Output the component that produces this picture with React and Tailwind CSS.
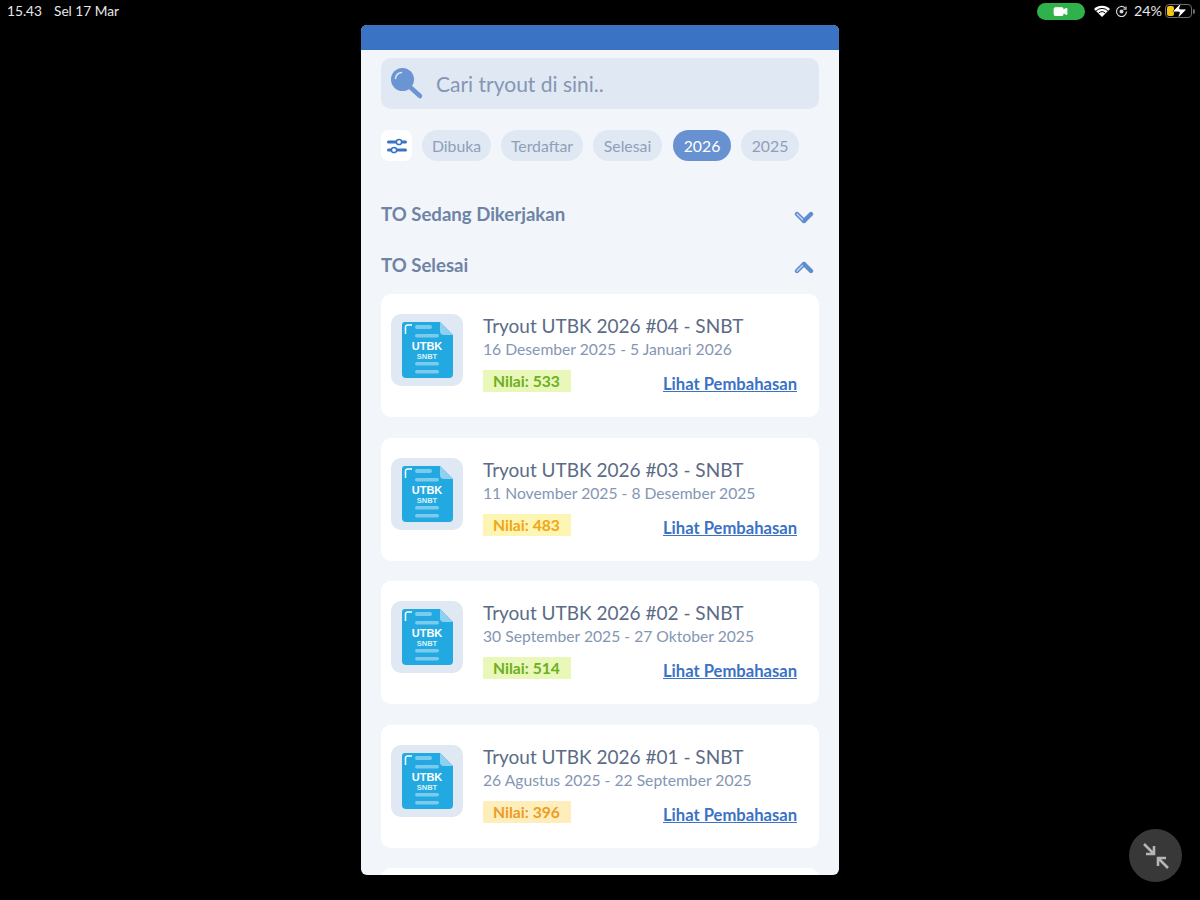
import { Video, Zap } from 'lucide-react';

const FONT = { fontFamily: '"Lato", "Noto Sans", sans-serif' };

const tryouts = [
  { title: 'Tryout UTBK 2026 #04 - SNBT', date: '16 Desember 2025 - 5 Januari 2026', score: 533, badge: 'bg-[#e9f7b8] text-[#6cb01e]' },
  { title: 'Tryout UTBK 2026 #03 - SNBT', date: '11 November 2025 - 8 Desember 2025', score: 483, badge: 'bg-[#fdf5b4] text-[#f3a512]' },
  { title: 'Tryout UTBK 2026 #02 - SNBT', date: '30 September 2025 - 27 Oktober 2025', score: 514, badge: 'bg-[#e9f7b8] text-[#6cb01e]' },
  { title: 'Tryout UTBK 2026 #01 - SNBT', date: '26 Agustus 2025 - 22 September 2025', score: 396, badge: 'bg-[#fdeebc] text-[#ee9c22]' },
];

const chips = [
  { label: 'Dibuka', width: 'w-[69px]' },
  { label: 'Terdaftar', width: 'w-[82px]' },
  { label: 'Selesai', width: 'w-[69px]' },
  { label: '2026', width: 'w-[58px] ml-px' },
  { label: '2025', width: 'w-[58px]' },
];

function DocIcon() {
  return (
    <div className="flex h-[72px] w-[72px] shrink-0 items-center justify-center rounded-[10px] bg-[#dfe8f3]">
      <svg width="51" height="56" viewBox="0 0 51 56">
        <path d="M3 0H38L51 13V52a4 4 0 0 1-4 4H4a4 4 0 0 1-4-4V3a3 3 0 0 1 3-3Z" fill="#23a9e1" />
        <path d="M38 0L51 13H42a4 4 0 0 1-4-4Z" fill="#8fd0ee" />
        <path d="M3.5 12V5a2 2 0 0 1 2-2H10" fill="none" stroke="#ffffff" strokeWidth="1.5" />
        <rect x="13" y="3" width="17" height="4" rx="2" fill="#7ccbee" />
        <rect x="13" y="12" width="24" height="3.5" rx="1.75" fill="#7ccbee" />
        <rect x="13" y="40" width="24" height="3.5" rx="1.75" fill="#7ccbee" />
        <rect x="13" y="48" width="24" height="3.5" rx="1.75" fill="#7ccbee" />
        <text x="25" y="28" textAnchor="middle" fontSize="11" fontWeight="700" fill="#ffffff" fontFamily="Liberation Sans, sans-serif">UTBK</text>
        <text x="25" y="37" textAnchor="middle" fontSize="7.5" fontWeight="700" fill="#d8f1fb" fontFamily="Liberation Sans, sans-serif">SNBT</text>
      </svg>
    </div>
  );
}

function TryoutCard({ item }) {
  return (
    <div className="flex h-[123px] gap-5 rounded-[10px] bg-white pl-[10px] pr-[22px] pt-5">
      <DocIcon />
      <div className="flex-1">
        <p className="-mt-px text-[19px] leading-[26px] text-[#5b6b86]">{item.title}</p>
        <p className="text-[15.7px] leading-[20px] text-[#8496b3]">{item.date}</p>
        <div className="mt-[11px] flex items-start justify-between">
          <span className={`w-[88px] pl-[10px] text-[15.7px] font-bold leading-[22px] ${item.badge}`}>Nilai: {item.score}</span>
          <a className="mt-[7px] border-b border-[#3a72c4] text-[16.6px] font-bold leading-[14px] text-[#3a72c4]">Lihat Pembahasan</a>
        </div>
      </div>
    </div>
  );
}

export default function App() {
  return (
    <div className="relative flex h-[900px] w-[1200px] flex-col overflow-hidden bg-black" style={FONT}>
      {/* status bar */}
      <div className="flex h-[25px] shrink-0 items-start justify-between pl-[7px] pr-[5px] pt-[2px] text-[13.7px] leading-[18px] text-[#e8e8e8]">
        <div className="flex gap-3">
          <span>15.43</span>
          <span>Sel 17 Mar</span>
        </div>
        <div className="flex items-center">
          <div className="mr-[9px] flex h-[17px] w-[48px] items-center justify-center rounded-full bg-[#2fb24c]">
            <Video size={15} fill="#ffffff" color="#ffffff" />
          </div>
          <svg width="16" height="12" viewBox="0 0 16 12">
            <path d="M8 12L0 4a11.5 11.5 0 0 1 16 0Z" fill="#ffffff" />
            <path d="M2.2 5.8a8.3 8.3 0 0 1 11.6 0" fill="none" stroke="#000000" strokeWidth="1" />
            <path d="M4.6 8.2a5 5 0 0 1 6.8 0" fill="none" stroke="#000000" strokeWidth="1" />
          </svg>
          <svg className="ml-[5px] mr-[6px]" width="13" height="13" viewBox="0 0 13 13" fill="none" stroke="#d8d8d8" strokeWidth="1.2">
            <path d="M11.5 6.5a5 5 0 1 1-1.5-3.6" />
            <path d="M11 1.5v2.6H8.4" />
            <circle cx="6.5" cy="6.5" r="2" fill="#d8d8d8" stroke="none" />
          </svg>
          <span className="text-[14.3px]">24%</span>
          <div className="relative ml-[3px] h-[14px] w-[27px] rounded-[4px] border border-[#6e6e6e] p-px">
            <div className="h-full w-[7px] rounded-[2px] bg-[#f5c518]" />
            <Zap className="absolute left-[5px] top-[-3px]" size={17} fill="#ffffff" color="#000000" strokeWidth={1} />
          </div>
          <div className="ml-px h-[5px] w-[2px] rounded-r-full bg-[#6e6e6e]" />
        </div>
      </div>

      {/* panel */}
      <div className="mx-auto flex h-[850px] w-[478px] flex-col overflow-hidden rounded-[6px] bg-[#f2f6fa]">
        <div className="h-[25px] shrink-0 bg-[#3a72c4]" />
        <div className="px-5 pt-2">
          <div className="flex h-[51px] items-center rounded-[10px] bg-[#e0e8f3] pl-[9px]">
            <svg width="34" height="34" viewBox="0 0 34 34">
              <line x1="20" y1="20" x2="30" y2="29" stroke="#6b94d2" strokeWidth="4.5" strokeLinecap="round" />
              <circle cx="12.5" cy="12.5" r="11.5" fill="#6b94d2" />
              <path d="M5.5 11.5a7 7 0 0 1 6-6" fill="none" stroke="#dfe8f5" strokeWidth="1.5" strokeLinecap="round" />
            </svg>
            <span className="ml-[12px] text-[21px] text-[#8496b3]">Cari tryout di sini..</span>
          </div>

          <div className="mt-[21px] flex items-center gap-[10px]">
            <div className="flex h-[31px] w-[31px] items-center justify-center rounded-[8px] bg-white">
              <svg width="20" height="16" viewBox="0 0 20 16">
                <rect x="0" y="2.5" width="20" height="3" rx="1.5" fill="#3a72c4" />
                <rect x="0" y="10.5" width="20" height="3" rx="1.5" fill="#3a72c4" />
                <circle cx="12" cy="4" r="2.6" fill="#ffffff" stroke="#3a72c4" strokeWidth="1.5" />
                <circle cx="7" cy="12" r="2.6" fill="#ffffff" stroke="#3a72c4" strokeWidth="1.5" />
              </svg>
            </div>
            {chips.map((c) => (
              <span
                key={c.label}
                className={`flex h-[31px] items-center justify-center rounded-full text-[15.8px] ${c.width} ${c.label === '2026' ? 'bg-[#6791d1] text-white' : 'bg-[#e0e8f3] text-[#8f9fba]'}`}
              >
                {c.label}
              </span>
            ))}
          </div>

          <div className="mt-[38px] flex items-center justify-between pr-[5px]">
            <span className="text-[18.6px] font-bold leading-[30px] text-[#6e83a6]">TO Sedang Dikerjakan</span>
            <svg className="mt-[6px]" width="20" height="14" viewBox="0 0 20 14" fill="none" strokeWidth="4.4" strokeLinecap="round" strokeLinejoin="round">
              <path d="M10 11L17 4" stroke="#5f8bd0" />
              <path d="M3 4l7 7" stroke="#5f8bd0" />
              <path d="M3 4l5.5 5.5" stroke="#cfdcf1" strokeWidth="1.2" />
            </svg>
          </div>
          <div className="mt-[21px] flex items-center justify-between pr-[5px]">
            <span className="text-[18.6px] font-bold leading-[30px] text-[#6e83a6]">TO Selesai</span>
            <svg className="mt-[6px]" width="20" height="14" viewBox="0 0 20 14" fill="none" strokeWidth="4.4" strokeLinecap="round" strokeLinejoin="round">
              <path d="M10 3L17 10" stroke="#5f8bd0" />
              <path d="M3 10l7-7" stroke="#5f8bd0" />
              <path d="M3 10l5.5-5.5" stroke="#cfdcf1" strokeWidth="1.2" />
            </svg>
          </div>

          <div className="mt-[14px] flex flex-col gap-[20.5px]">
            {tryouts.map((t) => (
              <TryoutCard key={t.score} item={t} />
            ))}
            <div className="h-[123px] rounded-[10px] bg-white" />
          </div>
        </div>
      </div>

      {/* floating button */}
      <div className="absolute left-[1129px] top-[829px] flex h-[53px] w-[53px] items-center justify-center rounded-full bg-[#383838]">
        <svg width="26" height="26" viewBox="0 0 26 26" fill="none" stroke="#b5b5b5" strokeWidth="2.6">
          <path d="M1 1l10 10M3 11h8V3" />
          <path d="M25 25L15 15M23 15h-8v8" />
        </svg>
      </div>
    </div>
  );
}
